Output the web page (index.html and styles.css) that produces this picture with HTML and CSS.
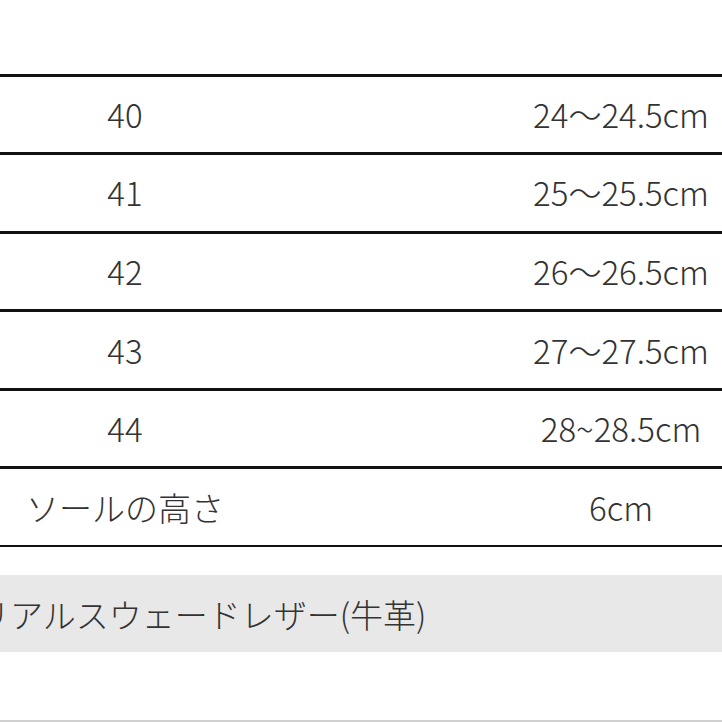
FILE: index.html
```html
<!DOCTYPE html>
<html lang="ja">
<head>
<meta charset="utf-8">
<link rel="stylesheet" href="styles.css">
</head>
<body>
<div class="page">
  <div class="table">
    <div class="row"><div class="c1">40</div><div class="c2">24〜24.5cm</div></div>
    <div class="row"><div class="c1">41</div><div class="c2">25〜25.5cm</div></div>
    <div class="row"><div class="c1">42</div><div class="c2">26〜26.5cm</div></div>
    <div class="row"><div class="c1">43</div><div class="c2">27〜27.5cm</div></div>
    <div class="row"><div class="c1">44</div><div class="c2">28~28.5cm</div></div>
    <div class="row last"><div class="c1">ソールの高さ</div><div class="c2">6cm</div></div>
  </div>
  <div class="band"><span class="band-text">リアルスウェードレザー(牛革)</span></div>
  <div class="rule"></div>
</div>
</body>
</html>
```
FILE: styles.css
```css
html, body {
  margin: 0;
  padding: 0;
  background: #fff;
}
body {
  width: 722px;
  height: 722px;
  overflow: hidden;
  font-family: "Noto Sans CJK JP", "Noto Sans", sans-serif;
  font-weight: 300;
  color: #333;
}
.page {
  padding-top: 73.5px;
}
.table {
  width: 992px;
  border-bottom: 2.5px solid #111;
}
.row {
  display: grid;
  grid-template-columns: 250px 742px;
  height: 75.6px;
  border-top: 3px solid #111;
  align-items: center;
  font-size: 33px;
}
.c1, .c2 {
  text-align: center;
  line-height: 1;
}
.band {
  margin-top: 28px;
  height: 77px;
  background: #e8e8e8;
  display: flex;
  align-items: center;
  font-size: 33px;
  overflow: hidden;
}
.band-text {
  margin-left: -23px;
  white-space: nowrap;
  line-height: 1;
  padding-top: 2px;
}
.rule {
  margin-top: 68px;
  height: 1.5px;
  background: #d0d0d0;
}
```
